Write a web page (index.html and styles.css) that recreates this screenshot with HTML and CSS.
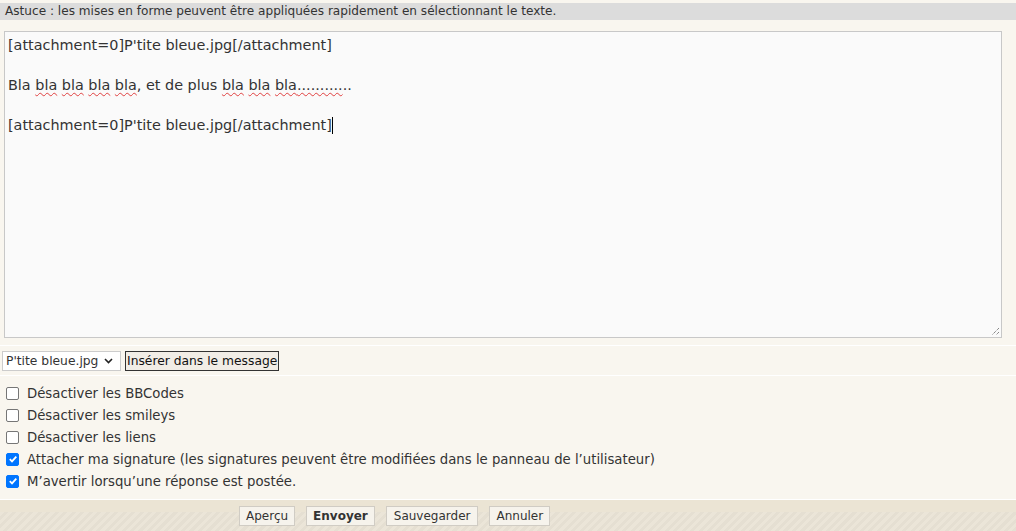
FILE: index.html
```html
<!DOCTYPE html>
<html lang="fr">
<head>
<meta charset="utf-8">
<link rel="stylesheet" href="styles.css">
</head>
<body>
<div class="page">
  <div class="hint">Astuce : les mises en forme peuvent être appliquées rapidement en sélectionnant le texte.</div>
  <div class="editor">
    <div class="textarea">
      <p>[attachment=0]P'tite bleue.jpg[/attachment]</p>
      <p>Bla <span class="sp">bla</span> <span class="sp">bla</span> <span class="sp">bla</span> <span class="sp">bla</span>, et de plus <span class="sp">bla</span> <span class="sp">bla</span> <span class="sp">bla</span><span class="sp">..........</span>..</p>
      <p>[attachment=0]P'tite bleue.jpg[/attachment]<span class="caret"></span></p>
      <svg class="grip" width="9" height="9" viewBox="0 0 9 9"><path d="M8 1 L1 8 M8 5 L5 8" stroke="#555" stroke-width="1" stroke-dasharray="1 1" fill="none"/></svg>
    </div>
  </div>
  <div class="attach">
    <div class="select">P'tite bleue.jpg <svg width="9" height="6" viewBox="0 0 9 6"><path d="M1 1 L4.5 4.5 L8 1" stroke="#222" stroke-width="1.6" fill="none"/></svg></div>
    <button class="insert">Insérer dans le message</button>
  </div>
  <div class="options">
    <label class="opt"><span class="cb"></span>Désactiver les BBCodes</label>
    <label class="opt"><span class="cb"></span>Désactiver les smileys</label>
    <label class="opt"><span class="cb"></span>Désactiver les liens</label>
    <label class="opt"><span class="cb on"><svg width="10" height="10" viewBox="0 0 10 10"><path d="M1.8 5.2 L4 7.4 L8.3 2.6" stroke="#fff" stroke-width="1.8" fill="none"/></svg></span>Attacher ma signature (les signatures peuvent être modifiées dans le panneau de l’utilisateur)</label>
    <label class="opt"><span class="cb on"><svg width="10" height="10" viewBox="0 0 10 10"><path d="M1.8 5.2 L4 7.4 L8.3 2.6" stroke="#fff" stroke-width="1.8" fill="none"/></svg></span>M’avertir lorsqu’une réponse est postée.</label>
  </div>
  <div class="submit">
    <div class="submit-top"></div>
    <div class="buttons">
      <button class="btn">Aperçu</button>
      <button class="btn primary">Envoyer</button>
      <button class="btn wide">Sauvegarder</button>
      <button class="btn">Annuler</button>
    </div>
  </div>
</div>
</body>
</html>
```
FILE: styles.css
```css
html, body {
  margin: 0;
  padding: 0;
  background: #f9f6ef;
}
body {
  font-family: "DejaVu Sans", Verdana, sans-serif;
  color: #333;
  width: 1016px;
  height: 531px;
  overflow: hidden;
}
.page {
  display: flex;
  flex-direction: column;
  height: 531px;
}
.hint {
  margin-top: 3px;
  height: 17px;
  line-height: 17px;
  background: #dcdcdc;
  font-size: 12.1px;
  padding-left: 5px;
  color: #333;
}
.editor {
  padding: 11px 14px 7px 4px;
}
.textarea {
  position: relative;
  height: 302px;
  border: 1px solid #c8c8c8;
  background: #fafafa;
  padding: 3px 0 0 3px;
  box-sizing: content-box;
  font-size: 14.4px;
  color: #333;
}
.textarea p {
  margin: 0 0 20px 0;
  line-height: 20px;
}
.sp {
  text-decoration: underline wavy #e04040;
  text-decoration-thickness: 1px;
  text-underline-offset: 2px;
}
.caret {
  display: inline-block;
  width: 1px;
  height: 17px;
  background: #000;
  vertical-align: -4px;
}
.grip {
  position: absolute;
  right: 1px;
  bottom: 1px;
}
.attach {
  border-top: 1px solid #fff;
  border-bottom: 1px solid #fff;
  display: flex;
  align-items: center;
  gap: 4px;
  padding: 5px 2px 4px;
  height: 20px;
}
.select {
  height: 20px;
  box-sizing: border-box;
  width: 119px;
  border: 1px solid #ccc;
  background: #fff;
  font-size: 12.3px;
  line-height: 18px;
  padding-left: 3px;
  display: flex;
  align-items: center;
  gap: 6px;
}
.insert {
  height: 20px;
  box-sizing: border-box;
  border: 1px solid #333;
  background: #f1ede6;
  font-family: "DejaVu Sans", Verdana, sans-serif;
  font-size: 12.3px;
  color: #111;
  padding: 0 1px;
  line-height: 17px;
}
.options {
  flex: 1;
  display: flex;
  flex-direction: column;
  gap: 4px;
  padding: 8px 0 0 6px;
}
.opt {
  display: flex;
  align-items: center;
  height: 18px;
  font-size: 13.25px;
  color: #333;
}
.cb {
  width: 13px;
  height: 13px;
  box-sizing: border-box;
  border: 1px solid #767676;
  border-radius: 2px;
  background: #fff;
  margin-right: 8px;
  display: flex;
  align-items: center;
  justify-content: center;
}
.cb.on {
  background: #0075ff;
  border-color: #0075ff;
}
.submit {
  border-top: 1px solid #fff;
}
.submit-top {
  height: 12px;
  background: #ebe4d4;
}
.buttons {
  height: 19px;
  background: repeating-linear-gradient(135deg, #ebe5d8 0 3px, #e5dfd2 3px 6px);
  display: flex;
  gap: 11px;
  padding-left: 239px;
  position: relative;
}
.btn {
  position: relative;
  top: -6px;
  height: 20px;
  box-sizing: border-box;
  border: 1px solid #d0ccc4;
  background: #f6f3ec;
  font-family: "DejaVu Sans", Verdana, sans-serif;
  font-size: 12px;
  color: #333;
  padding: 0 6px;
  line-height: 17px;
}
.btn.wide {
  padding: 0 7px;
}
.btn.primary {
  font-weight: bold;
}
```
